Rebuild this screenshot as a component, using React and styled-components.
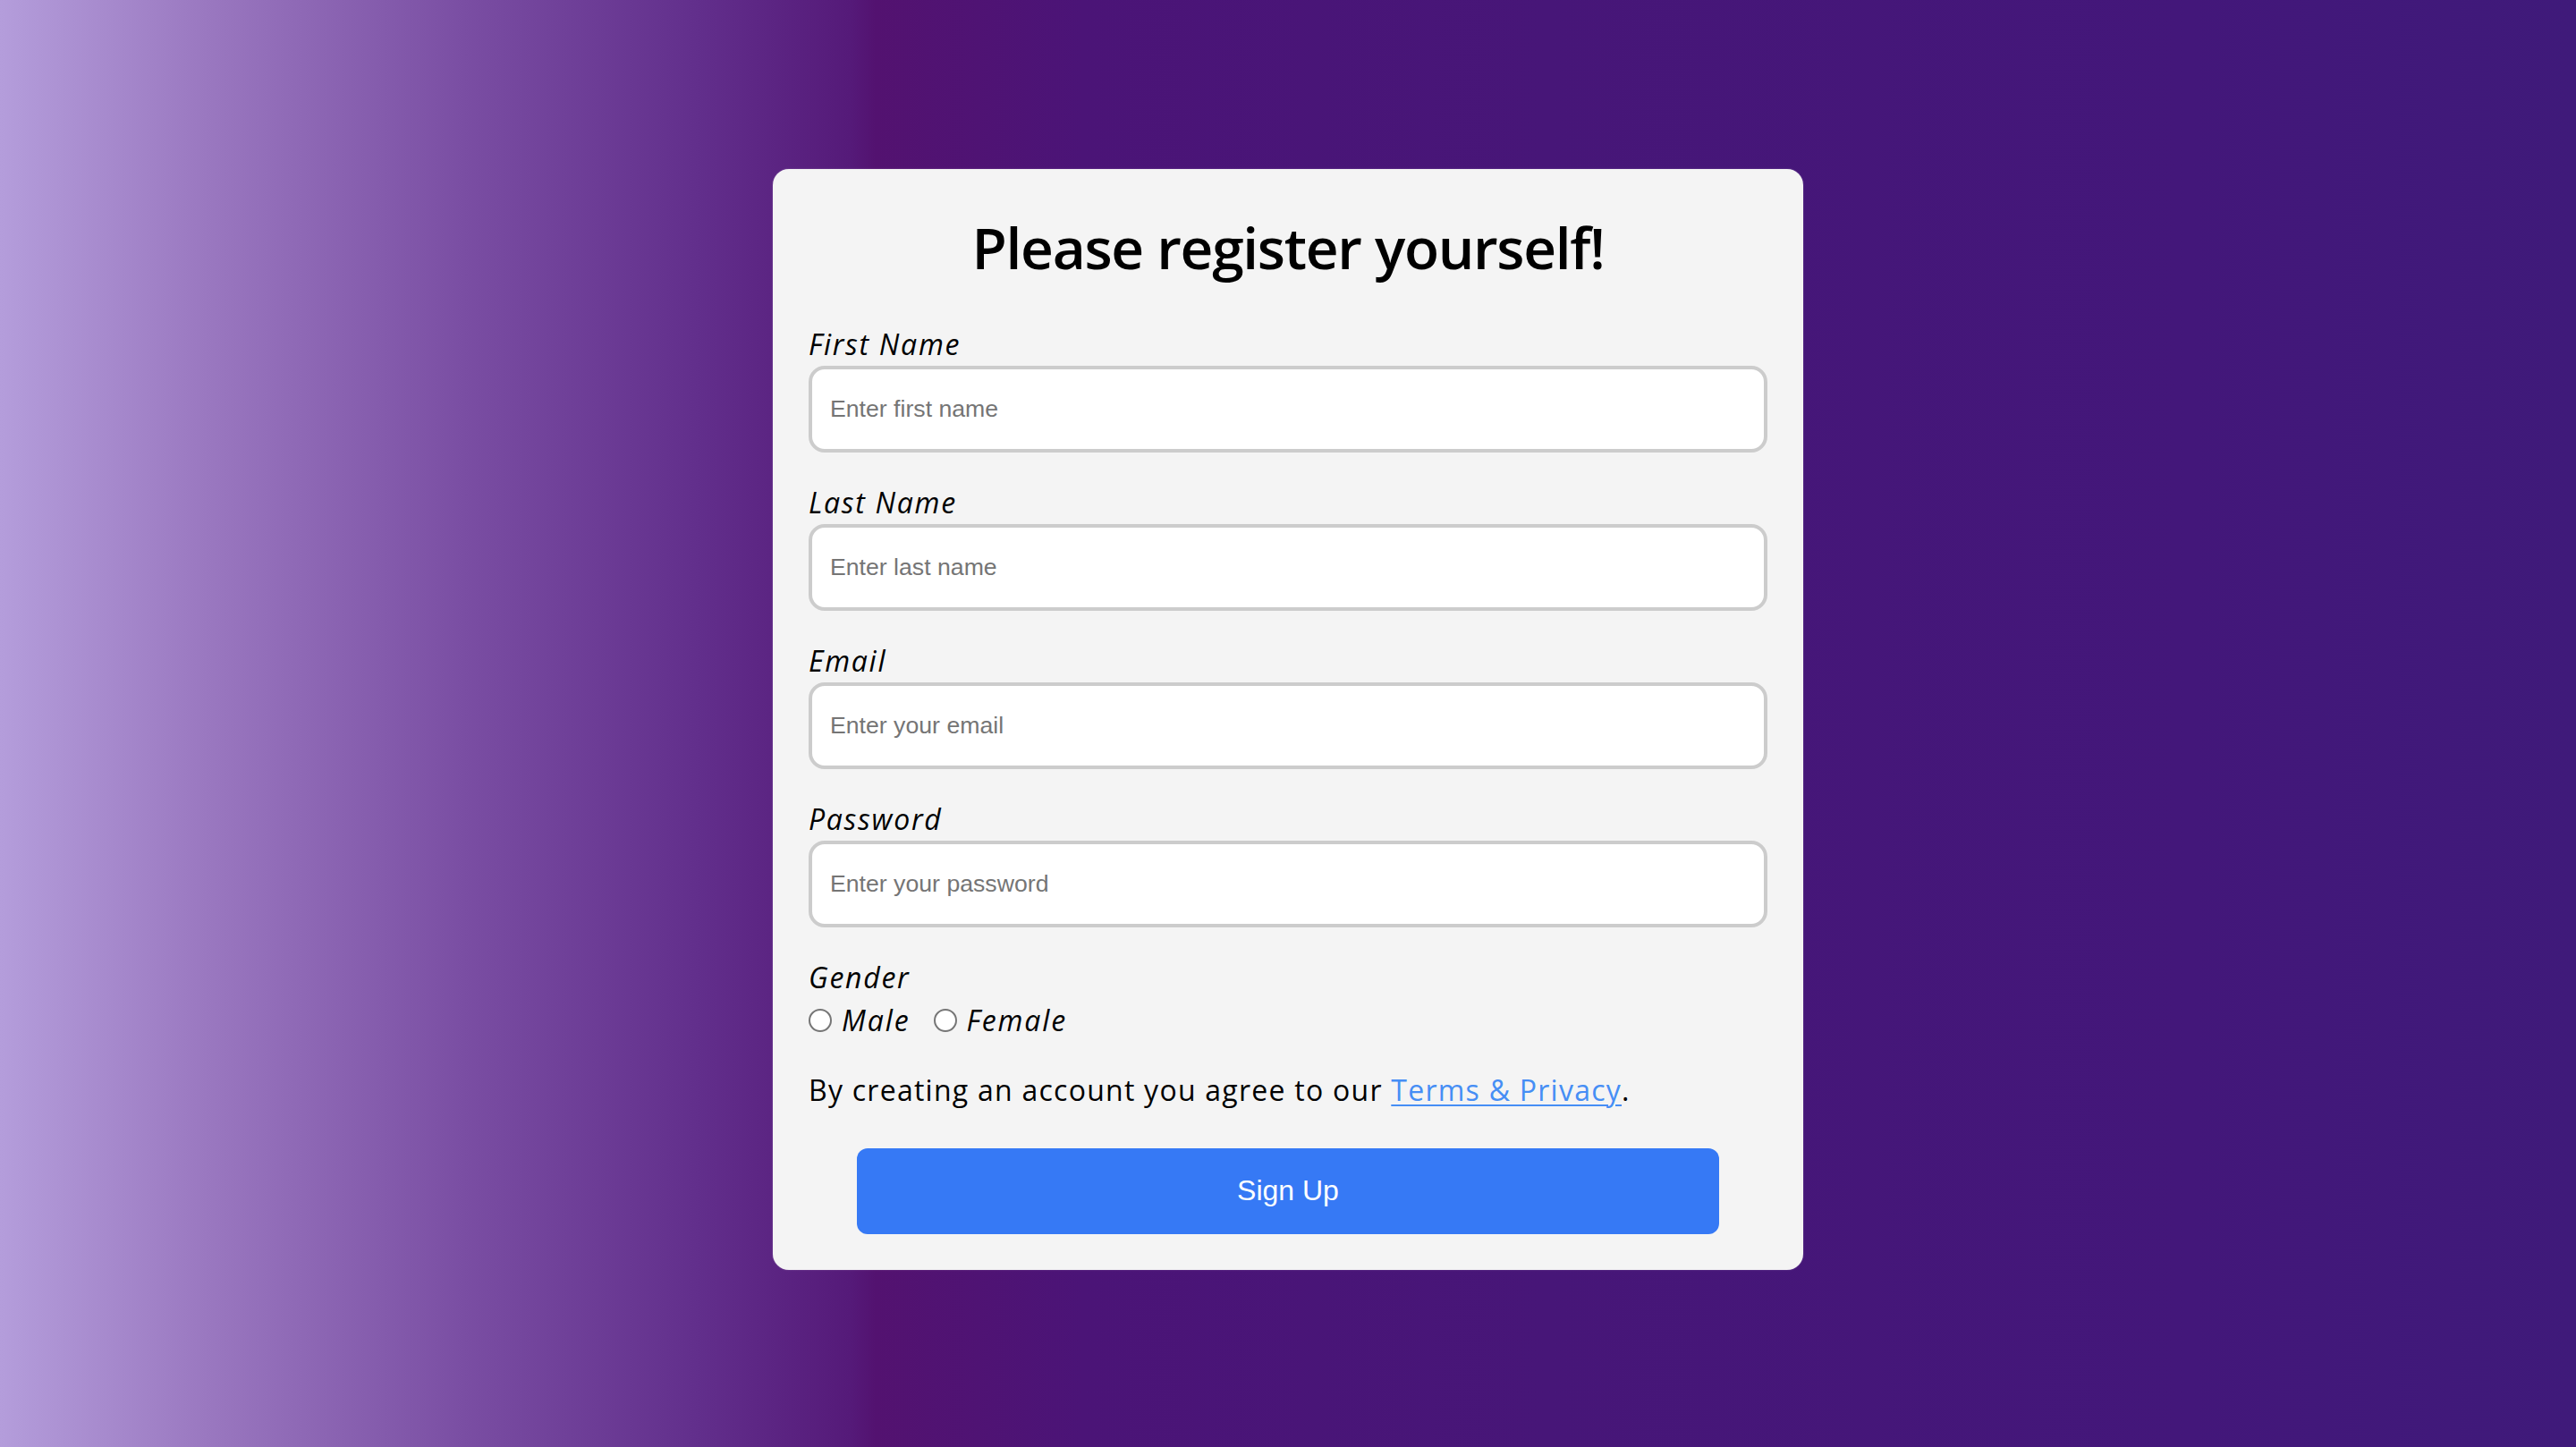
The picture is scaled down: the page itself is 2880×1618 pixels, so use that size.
import React from "react";
import styled, { createGlobalStyle } from "styled-components";

const Global = createGlobalStyle`
  * { box-sizing: border-box; }
  html, body { margin: 0; padding: 0; }
  body {
    font-family: "Open Sans", "Noto Sans", sans-serif;
    color: #000;
  }
`;

const Page = styled.main`
  min-height: 100vh;
  display: flex;
  align-items: center;
  justify-content: center;
  padding-bottom: 10px;
  background: linear-gradient(
    to right,
    #b49ddb 0%,
    #9a78c0 8%,
    #7a4ea3 18%,
    #622f8c 27%,
    #551a79 33%,
    #531270 34%,
    #4b1477 42%,
    #471678 60%,
    #43177a 85%,
    #3f1a7a 100%
  );
`;

const Card = styled.form`
  width: 1152px;
  background: #f4f4f4;
  border-radius: 18px;
  padding: 40px;
  display: flex;
  flex-direction: column;
  box-shadow: 0 0 2px rgba(255, 255, 255, 0.25);
`;

const Title = styled.h1`
  margin: 0 0 36px;
  font-size: 64px;
  line-height: 96px;
  font-weight: 600;
  text-align: center;
  letter-spacing: -1.3px;
`;

const Field = styled.div`
  display: flex;
  flex-direction: column;
  margin-bottom: ${(p) => (p.$last ? "0" : "32px")};
`;

const Label = styled.label`
  display: block;
  font-size: 32px;
  line-height: 48px;
  font-style: italic;
  font-weight: 400;
  letter-spacing: 1.7px;
`;

const Input = styled.input`
  width: 100%;
  height: 97px;
  border: 4px solid #cccccc;
  border-radius: 18px;
  background: #fff;
  padding: 0 20px;
  font-family: "Liberation Sans", Arial, sans-serif;
  font-size: 26.67px;
  color: #000;
  outline: none;
  &::placeholder {
    color: #757575;
  }
`;

const RadioRow = styled.div`
  display: flex;
  align-items: center;
  gap: 26px;
  height: 48px;
`;

const Option = styled.label`
  display: flex;
  align-items: center;
  gap: 11px;
  font-size: 32px;
  line-height: 48px;
  font-style: italic;
  letter-spacing: 1.9px;
`;

const Radio = styled.input.attrs({ type: "radio" })`
  appearance: none;
  -webkit-appearance: none;
  margin: 0;
  width: 26px;
  height: 26px;
  border-radius: 50%;
  border: 2px solid #767676;
  background: #fff;
  flex-shrink: 0;
  &:checked {
    background: radial-gradient(circle, #1a73e8 0 6px, #fff 7px);
    border-color: #1a73e8;
  }
`;

const Terms = styled.p`
  margin: 30px 0 41px;
  font-size: 32px;
  line-height: 48px;
  letter-spacing: 1.25px;
`;

const Link = styled.a`
  color: #468ef5;
  text-decoration: underline;
  text-underline-offset: 4px;
  text-decoration-thickness: 2px;
`;

const Button = styled.button`
  display: block;
  width: 90%;
  height: 96px;
  margin: 0 auto;
  border: none;
  border-radius: 12px;
  background: #3679f5;
  color: #fff;
  font-family: "Liberation Sans", Arial, sans-serif;
  font-size: 32px;
  cursor: pointer;
`;

const fields = [
  { id: "first", label: "First Name", type: "text", placeholder: "Enter first name" },
  { id: "last", label: "Last Name", type: "text", placeholder: "Enter last name" },
  { id: "email", label: "Email", type: "email", placeholder: "Enter your email" },
  { id: "password", label: "Password", type: "password", placeholder: "Enter your password" },
];

export default function App() {
  return (
    <>
      <Global />
      <Page>
        <Card onSubmit={(e) => e.preventDefault()}>
          <Title>Please register yourself!</Title>
          {fields.map((f) => (
            <Field key={f.id}>
              <Label htmlFor={f.id}>{f.label}</Label>
              <Input id={f.id} type={f.type} placeholder={f.placeholder} />
            </Field>
          ))}
          <Field $last>
            <Label as="span">Gender</Label>
            <RadioRow>
              <Option>
                <Radio name="gender" value="male" />
                Male
              </Option>
              <Option>
                <Radio name="gender" value="female" />
                Female
              </Option>
            </RadioRow>
          </Field>
          <Terms>
            By creating an account you agree to our <Link href="#">Terms &amp; Privacy</Link>.
          </Terms>
          <Button type="submit">Sign Up</Button>
        </Card>
      </Page>
    </>
  );
}
